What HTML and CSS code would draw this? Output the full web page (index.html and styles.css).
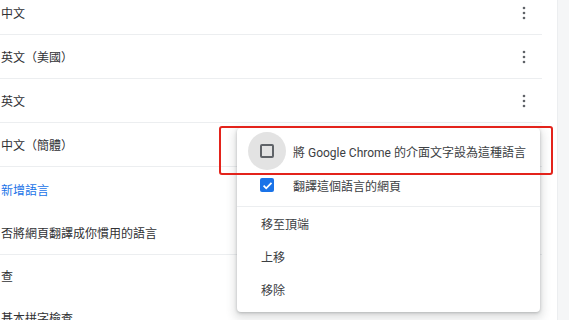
FILE: index.html
```html
<!DOCTYPE html>
<html lang="zh-Hant">
<head>
<meta charset="utf-8">
<title>語言</title>
<link rel="stylesheet" href="styles.css">
</head>
<body>
<div class="page">
  <div class="card">
    <div class="list">
      <div class="row sep"><span class="label">中文</span><span class="more"><svg width="4" height="14" viewBox="0 0 4 14"><circle cx="2" cy="2" r="1.3"/><circle cx="2" cy="7" r="1.3"/><circle cx="2" cy="12" r="1.3"/></svg></span></div>
      <div class="row sep"><span class="label">英文<span class="paren">（</span>美國<span class="paren">）</span></span><span class="more"><svg width="4" height="14" viewBox="0 0 4 14"><circle cx="2" cy="2" r="1.3"/><circle cx="2" cy="7" r="1.3"/><circle cx="2" cy="12" r="1.3"/></svg></span></div>
      <div class="row sep"><span class="label">英文</span><span class="more"><svg width="4" height="14" viewBox="0 0 4 14"><circle cx="2" cy="2" r="1.3"/><circle cx="2" cy="7" r="1.3"/><circle cx="2" cy="12" r="1.3"/></svg></span></div>
      <div class="row sep"><span class="label">中文<span class="paren">（</span>簡體<span class="paren">）</span></span></div>
      <div class="row"><span class="label link">新增語言</span></div>
      <div class="row sep"><span class="label">否將網頁翻譯成你慣用的語言</span></div>
      <div class="row short"><span class="label">查</span></div>
      <div class="row"><span class="label">基本拼字檢查</span></div>
    </div>
  </div>
  <div class="side"></div>

  <div class="menu">
    <div class="menu-item check-item">
      <span class="box-wrap"><span class="ripple"></span><span class="box"></span></span>
      <span>將 Google Chrome 的介面文字設為這種語言</span>
    </div>
    <div class="menu-item check-item">
      <span class="box-wrap"><span class="box checked"><svg width="13" height="13" viewBox="0 0 13 13"><path d="M2.6 6.7 L5.2 9.3 L10.5 3.9" fill="none" stroke="#fff" stroke-width="1.8"/></svg></span></span>
      <span>翻譯這個語言的網頁</span>
    </div>
    <div class="menu-divider"></div>
    <div class="menu-item">移至頂端</div>
    <div class="menu-item">上移</div>
    <div class="menu-item">移除</div>
  </div>

  <div class="highlight"></div>
</div>
</body>
</html>
```
FILE: styles.css
```css
html, body {
  margin: 0;
  padding: 0;
}
body {
  width: 569px;
  height: 320px;
  overflow: hidden;
  font-family: Roboto, "Noto Sans CJK TC", sans-serif;
  font-size: 12px;
  color: #303134;
  background: #f5f6f7;
}
.page {
  position: relative;
  display: flex;
  width: 569px;
  height: 320px;
}
.card {
  width: 557px;
  height: 320px;
  background: #fff;
  border-right: 1px solid #eceef0;
  overflow: hidden;
}
.side {
  flex: 1;
}
.list {
  margin-top: -9px;
  width: 542px;
}
.row {
  box-sizing: border-box;
  height: 44px;
  display: flex;
  align-items: center;
  justify-content: space-between;
  padding-left: 1px;
}
.row.sep {
  border-bottom: 1px solid #eceef0;
}
.row.short {
  height: 40px;
}
.label {
  white-space: nowrap;
}
.paren {
  display: inline-block;
  width: 12px;
  text-align: center;
  font-family: "Noto Sans CJK TC", sans-serif;
}
.link {
  color: #1a73e8;
}
.more {
  width: 36px;
  display: flex;
  justify-content: center;
}
.more svg {
  fill: #5f6368;
}
.menu {
  position: absolute;
  left: 237px;
  top: 128px;
  width: 303px;
  box-sizing: border-box;
  padding: 6px 0;
  background: #fff;
  border-radius: 4px;
  box-shadow: 0 1px 3px rgba(60, 64, 67, 0.3), 0 4px 8px 3px rgba(60, 64, 67, 0.15);
}
.menu-item {
  height: 33px;
  display: flex;
  align-items: center;
  padding-left: 24px;
  color: #3c4043;
  white-space: nowrap;
}
.check-item {
  padding-left: 23px;
  height: 34px;
}
.box-wrap {
  position: relative;
  width: 14px;
  height: 14px;
  margin-right: 19px;
}
.ripple {
  position: absolute;
  left: -12px;
  top: -12px;
  width: 38px;
  height: 38px;
  border-radius: 50%;
  background: #e3e3e3;
}
.box {
  position: absolute;
  left: 0;
  top: 0;
  box-sizing: border-box;
  width: 14px;
  height: 14px;
  border: 2px solid #5f6368;
  border-radius: 2px;
}
.box.checked {
  border: none;
  background: #1a73e8;
  display: flex;
  align-items: center;
  justify-content: center;
}
.menu-divider {
  height: 1px;
  background: #eceef0;
  margin: 4px 0 0;
}
.highlight {
  position: absolute;
  left: 219px;
  top: 126px;
  width: 334px;
  height: 49px;
  box-sizing: border-box;
  border: 2.5px solid #e3231b;
  border-radius: 3px;
}
```
